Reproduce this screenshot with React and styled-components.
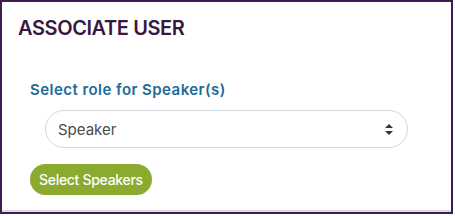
import React from 'react';
import styled, { createGlobalStyle } from 'styled-components';

const GlobalStyle = createGlobalStyle`
    body {
        margin: 0;
        background: #fff;
        font-family: Inter, "Noto Sans", sans-serif;
    }
`

const Panel = styled.div`
    width: 453px;
    height: 214px;
    box-sizing: border-box;
    border: 2px solid #3f1c51;
    box-shadow: inset 0 -2px 0 #dcdcdc;
    background: #fff;
    padding: 14px 16px 0 16px;
`

const Title = styled.h2`
    margin: 0;
    font-size: 20px;
    line-height: 24px;
    font-weight: 600;
    color: #38183f;
    letter-spacing: -0.4px;
`

const Form = styled.div`
    display: flex;
    flex-direction: column;
    align-items: flex-start;
    padding: 41px 0 0 12px;
`

const Label = styled.label`
    font-size: 15px;
    line-height: 18px;
    font-weight: 600;
    color: #1e6a98;
    letter-spacing: 0.45px;
`

const SelectWrap = styled.div`
    position: relative;
    width: 363px;
    margin: 11px 0 0 15px;
`

const Select = styled.select`
    appearance: none;
    width: 100%;
    height: 38px;
    box-sizing: border-box;
    border: 1px solid #d3d6dc;
    border-radius: 19px;
    background: #fff;
    padding: 0 36px 0 12px;
    font-family: Inter, "Noto Sans", sans-serif;
    font-size: 15px;
    color: #4a4a4a;
    outline: none;
`

const Arrow = styled.svg`
    position: absolute;
    right: 15px;
    top: 14px;
    pointer-events: none;
`

const Button = styled.button`
    margin-top: 16px;
    height: 31px;
    padding: 0 9px;
    border: none;
    border-radius: 16px;
    background: #8aab2e;
    color: #fff;
    font-family: Inter, "Noto Sans", sans-serif;
    font-size: 14px;
    font-weight: 500;
    letter-spacing: -0.3px;
`

const App = () => {
    return (
        <>
            <GlobalStyle />
            <Panel>
                <Title>ASSOCIATE USER</Title>
                <Form>
                    <Label>Select role for Speaker(s)</Label>
                    <SelectWrap>
                        <Select defaultValue="speaker">
                            <option value="speaker">Speaker</option>
                        </Select>
                        <Arrow width="8" height="11" viewBox="0 0 8 11">
                            <path d="M4 0 L8 4 L0 4 Z M0 7 L8 7 L4 11 Z" fill="#333" />
                        </Arrow>
                    </SelectWrap>
                    <Button>Select Speakers</Button>
                </Form>
            </Panel>
        </>
    )
}

export default App;
